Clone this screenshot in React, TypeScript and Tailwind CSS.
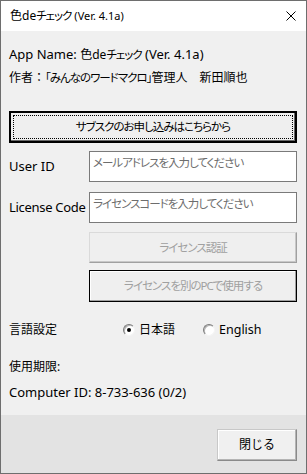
import React from "react";

const KANA = "text-[11.5px] tracking-[-1px] [font-feature-settings:'palt']";

function Radio({ checked }: { checked?: boolean }) {
  return (
    <span className="relative inline-flex w-[12px] h-[12px] rounded-full bg-white border border-t-[#7a7a7a] border-l-[#7a7a7a] border-b-[#f4f4f4] border-r-[#f4f4f4] shadow-[inset_1px_1px_0_#b5b5b5] items-center justify-center shrink-0">
      {checked && <span className="w-[4px] h-[4px] rounded-full bg-black" />}
    </span>
  );
}

export default function App() {
  return (
    <div className="w-[307px] h-[474px] border border-[#6e6e6e] flex flex-col bg-[#f0f0f0] text-black text-[12px] font-['Noto_Sans','Noto_Sans_CJK_JP',sans-serif] overflow-hidden">
      {/* title bar */}
      <div className="h-[30px] bg-white flex items-center pl-[9px] pr-[10px] shrink-0">
        <span className="leading-[20px] whitespace-nowrap">
          色de<span className={KANA}>チェック</span>
          <span className="text-[11px]"> (Ver. 4.1a)</span>
        </span>
        <svg className="ml-auto" width="10" height="10" viewBox="0 0 10 10">
          <path d="M0.5 0.5L9.5 9.5M9.5 0.5L0.5 9.5" stroke="#000" strokeWidth="1" />
        </svg>
      </div>

      {/* body */}
      <div className="flex-1 flex flex-col pl-[8px] pr-[9px] pt-[11px]">
        <div className="h-[24px] leading-[24px] whitespace-nowrap">
          <span className="text-[13px]">App Name: </span>色de<span className={KANA}>チェック</span>
          <span className="text-[13px]"> (Ver. 4.1a)</span>
        </div>
        <div className="h-[24px] leading-[24px] whitespace-nowrap">
          作者：<span className={KANA}>「みんなのワードマクロ」</span>管理人　新田順也
        </div>

        <button className="mt-[21px] h-[32px] w-full border-2 border-black bg-[#efefef] shadow-[inset_-1px_-1px_0_#696969] outline outline-1 outline-dotted outline-black [outline-offset:-5px] flex items-center justify-center">
          <span className={KANA}>サブスクのお申し込みはこちらから</span>
        </button>

        <div className="mt-[8px] flex items-center">
          <div className="w-[80px] text-[13px] whitespace-nowrap">User ID</div>
          <input
            className={
              "flex-1 min-w-0 h-[31px] border border-[#7a7a7a] bg-white pl-[3px] pt-0 pb-[8px] outline-none placeholder:text-[#6d6d6d] " +
              KANA
            }
            placeholder="メールアドレスを入力してください"
          />
        </div>

        <div className="mt-[10px] flex items-center">
          <div className="w-[80px] text-[13px] whitespace-nowrap tracking-[-0.3px]">License Code</div>
          <input
            className={
              "flex-1 min-w-0 h-[31px] border border-[#7a7a7a] bg-white pl-[3px] pt-0 pb-[8px] outline-none placeholder:text-[#6d6d6d] " +
              KANA
            }
            placeholder="ライセンスコードを入力してください"
          />
        </div>

        <button className="mt-[9px] ml-[80px] h-[31px] border border-[#dadada] border-r-[#a0a0a0] border-b-[#a0a0a0] shadow-[inset_-1px_-1px_0_#c8c8c8] bg-[#efefef] text-[#a0a0a0] flex items-center justify-center">
          <span className={KANA}>ライセンス認証</span>
        </button>

        <button className="mt-[7px] ml-[80px] h-[32px] border border-black shadow-[inset_-1px_-1px_0_#a0a0a0,inset_1px_1px_0_#ffffff] bg-[#efefef] text-[#a0a0a0] flex items-center justify-center">
          <span className={KANA}>ライセンスを別のPCで使用する</span>
        </button>

        <div className="mt-[18px] h-[20px] flex items-center whitespace-nowrap">
          <div className="w-[114px]">言語設定</div>
          <Radio checked />
          <span className="ml-[4px]">日本語</span>
          <span className="ml-[28px] flex items-center">
            <Radio />
            <span className="ml-[4px] text-[12.5px]">English</span>
          </span>
        </div>

        <div className="mt-[17px] h-[20px] leading-[20px]">使用期限:</div>
        <div className="mt-[5px] h-[20px] leading-[20px] text-[13px] whitespace-nowrap">
          Computer ID: 8-733-636 (0/2)
        </div>
      </div>

      {/* footer */}
      <div className="h-[58px] shrink-0 bg-[#e3e3e3] flex justify-end items-start pt-[14px] pr-[9px]">
        <button className="w-[80px] h-[32px] border border-[#c8c8c8] border-r-[#8a8a8a] border-b-[#8a8a8a] shadow-[inset_-1px_-1px_0_#b4b4b4,inset_1px_1px_0_#ffffff] bg-[#f0f0f0] flex items-center justify-center">
          閉じる
        </button>
      </div>
    </div>
  );
}
